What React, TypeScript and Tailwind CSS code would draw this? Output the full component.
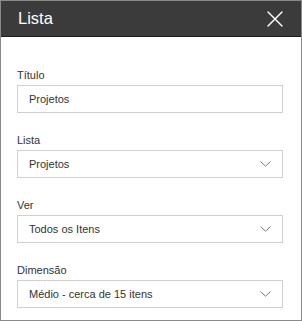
import { X } from "lucide-react";

const fields = [
  { label: "Título", value: "Projetos", select: false },
  { label: "Lista", value: "Projetos", select: true },
  { label: "Ver", value: "Todos os Itens", select: true },
  { label: "Dimensão", value: "Médio - cerca de 15 itens", select: true },
];

const Chevron = () => (
  <svg width="11" height="6" viewBox="0 0 11 6" className="text-[#7a7a7a]">
    <path d="M0.5 0.5 L5.5 5.2 L10.5 0.5" fill="none" stroke="currentColor" strokeWidth="1" />
  </svg>
);

export default function App() {
  return (
    <div className="w-[302px] h-[321px] border border-[#8a8a8a] bg-white font-['Liberation_Sans',Arial,sans-serif] flex flex-col">
      <div className="h-[36px] bg-[#3b3b3b] border-b border-[#1e1e1e] flex items-center justify-between pl-[17px] pr-[12px]">
        <h1 className="text-[16.5px] text-white leading-none">Lista</h1>
        <X className="w-[28px] h-[28px] text-white" strokeWidth={1.15} />
      </div>
      <div className="flex flex-col gap-[20px] pt-[31px] pl-[16px]">
        {fields.map((f) => (
          <div key={f.label} className="flex flex-col gap-[3px]">
            <label className="text-[11px] leading-[14px] text-[#333333]">{f.label}</label>
            <div className="w-[266px] h-[28px] border border-[#d0d0d0] flex items-center justify-between pl-[11px] pr-[11px]">
              <span className="text-[11px] text-[#333333]">{f.value}</span>
              {f.select && <Chevron />}
            </div>
          </div>
        ))}
      </div>
    </div>
  );
}
